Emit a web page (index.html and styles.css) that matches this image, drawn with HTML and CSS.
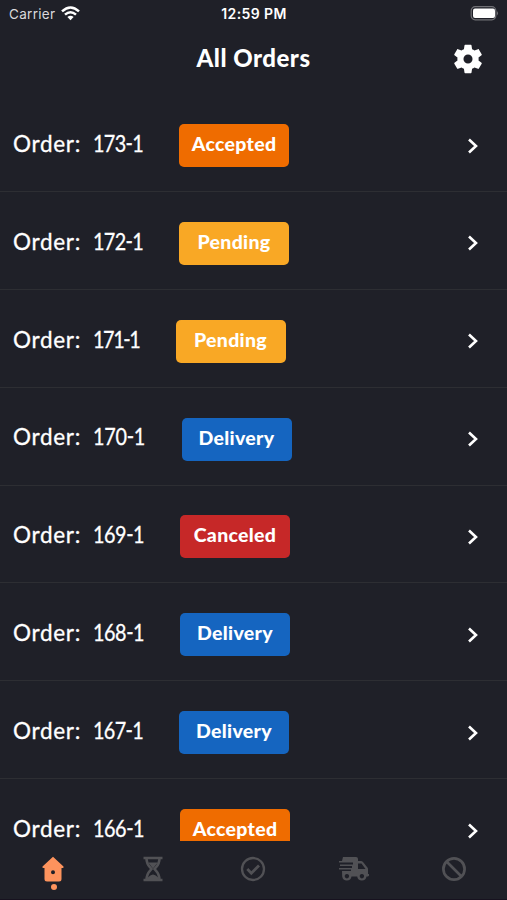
FILE: index.html
```html
<!DOCTYPE html>
<html lang="en">
<head>
<meta charset="utf-8">
<title>All Orders</title>
<link rel="stylesheet" href="styles.css">
</head>
<body>
<div class="app">
  <div class="status">
    <div class="carrier"><span>Carrier</span>
      <svg width="19" height="15" viewBox="0 0 19 15" fill="none" stroke="#fff" stroke-width="2.5"><path d="M1 5.4Q9.500-2.400 18 5.400M4 8.700Q9.500 3.700 15 8.700"/><path d="M6.400 11Q9.500 8.300 12.600 11L9.500 14.200z" fill="#fff" stroke="none"/></svg>
    </div>
    <div class="clock">12:59 PM</div>
    <svg class="battery" width="29" height="15" viewBox="0 0 28 15"><rect x=".7" y=".7" width="24.600" height="13.100" rx="4" fill="none" stroke="#707075" stroke-width="1.200"/><rect x="2.500" y="2.500" width="22" height="9.500" rx="2" fill="#fff"/><path d="M26.400 5q2.200 2.200 0 4.500z" fill="#707075"/></svg>
  </div>
  <header class="header">
    <h1>All Orders</h1>
    <svg class="gear" width="34" height="34" viewBox="0 0 24 24" fill="#fff"><path d="M19.430 12.980c.04-.32.070-.64.070-.98s-.03-.66-.07-.98l2.110-1.650c.19-.15.240-.42.120-.64l-2-3.460c-.12-.22-.39-.3-.61-.22l-2.490 1c-.52-.4-1.080-.73-1.690-.98l-.38-2.650A.49.49 0 0 0 14 2h-4c-.25 0-.46.180-.49.420l-.38 2.650c-.61.250-1.170.590-1.690.980l-2.490-1c-.23-.09-.49 0-.61.220l-2 3.460c-.13.220-.07.490.120.640l2.110 1.650c-.04.320-.07.650-.07.980s.03.660.070.980l-2.110 1.650c-.19.150-.24.420-.12.640l2 3.460c.12.220.39.300.61.220l2.490-1c.52.400 1.080.730 1.690.980l.38 2.650c.03.240.240.420.490.420h4c.25 0 .46-.18.490-.42l.38-2.650c.61-.25 1.170-.59 1.690-.98l2.490 1c.23.090.490 0 .610-.22l2-3.460c.12-.22.070-.49-.12-.64zM12 15.200a3.200 3.200 0 1 1 0-6.400 3.200 3.200 0 0 1 0 6.400z"/></svg>
  </header>
  <main class="orders">
    <div class="row"><span class="label">Order:</span><span class="number">173-1</span><span class="badge accepted">Accepted</span><svg class="chevron" viewBox="0 0 12 18"><path d="M2 2.500 9 9 2 15.500"/></svg></div>
    <div class="row"><span class="label">Order:</span><span class="number">172-1</span><span class="badge pending">Pending</span><svg class="chevron" viewBox="0 0 12 18"><path d="M2 2.500 9 9 2 15.500"/></svg></div>
    <div class="row"><span class="label">Order:</span><span class="number slim">171-1</span><span class="badge pending">Pending</span><svg class="chevron" viewBox="0 0 12 18"><path d="M2 2.500 9 9 2 15.500"/></svg></div>
    <div class="row"><span class="label">Order:</span><span class="number wide">170-1</span><span class="badge delivery">Delivery</span><svg class="chevron" viewBox="0 0 12 18"><path d="M2 2.500 9 9 2 15.500"/></svg></div>
    <div class="row"><span class="label">Order:</span><span class="number medium">169-1</span><span class="badge canceled">Canceled</span><svg class="chevron" viewBox="0 0 12 18"><path d="M2 2.500 9 9 2 15.500"/></svg></div>
    <div class="row"><span class="label">Order:</span><span class="number medium">168-1</span><span class="badge delivery">Delivery</span><svg class="chevron" viewBox="0 0 12 18"><path d="M2 2.500 9 9 2 15.500"/></svg></div>
    <div class="row"><span class="label">Order:</span><span class="number">167-1</span><span class="badge delivery">Delivery</span><svg class="chevron" viewBox="0 0 12 18"><path d="M2 2.500 9 9 2 15.500"/></svg></div>
    <div class="row"><span class="label">Order:</span><span class="number medium">166-1</span><span class="badge accepted">Accepted</span><svg class="chevron" viewBox="0 0 12 18"><path d="M2 2.500 9 9 2 15.500"/></svg></div>
  </main>
  <nav class="tabs">
    <div class="tab active">
      <svg width="24" height="26" viewBox="0 0 24 26"><path fill="#fd935d" fill-rule="evenodd" d="M12 .8 1.500 10.500Q1 12 2.500 12H3.500V23Q3.500 25.500 6 25.500H18Q20.500 25.500 20.500 23V12H21.500Q23 12 22.500 10.500zM12 14.200a2 2 0 1 1 0 4 2 2 0 0 1 0-4z"/></svg>
      <i class="dot"></i>
    </div>
    <div class="tab"><svg width="20" height="26" viewBox="0 0 20 26" fill="none" stroke="#515155" stroke-width="2.600"><path d="M.5 2H19.500M.5 24H19.500M3.500 2C3.500 9 6 10 8.500 13 6 16 3.500 17 3.500 24M16.500 2C16.500 9 14 10 11.500 13 14 16 16.500 17 16.500 24"/><path d="M5.200 6.500H14.800L10 12.500zM4 23Q5 20 10 18.500 15 20 16 23z" fill="#515155" stroke="none"/></svg></div>
    <div class="tab"><svg width="26" height="26" viewBox="0 0 26 26" fill="none" stroke="#515155" stroke-width="2.300"><circle cx="13" cy="13" r="11"/><path d="m7.300 13 4 4.200L19 9.500" stroke-width="2.700"/></svg></div>
    <div class="tab"><svg width="32" height="26" viewBox="0 0 32 26"><path fill="#515155" fill-rule="evenodd" d="M5 1H18Q20 1 20 3V5H23Q24 5 25 6L29 11Q30 12 30 13V18H31Q31.500 20 30 20.500H28.500A4.700 4.700 0 0 1 19.200 20.500H13.500A4.700 4.700 0 0 1 4.200 20.500L4 15H13V13.500H1V12H14V10H2V8.500H15V6.500H1V5H4zM20 7.500V13H27.500L23.500 7.500zM8.900 18a2.200 2.200 0 1 0 .01 0zM23.900 18a2.200 2.200 0 1 0 .01 0z"/></svg></div>
    <div class="tab"><svg width="26" height="26" viewBox="0 0 26 26" fill="none" stroke="#515155" stroke-width="2.700"><circle cx="13" cy="13" r="10.600"/><path d="m5.500 5.500 15 15"/></svg></div>
  </nav>
</div>
</body>
</html>
```
FILE: styles.css
```css
* { box-sizing: border-box; }
body {
  margin: 0;
  background: #1f2028;
  color: #fff;
  font-family: Lato, "Liberation Sans", sans-serif;
}
.app {
  height: 900px;
  display: flex;
  flex-direction: column;
  overflow: hidden;
}
.status {
  height: 27px;
  flex: none;
  display: grid;
  grid-template-columns: 1fr auto 1fr;
  align-items: center;
  padding: 0 8px 0 9px;
  font-family: Inter, "Liberation Sans", sans-serif;
  font-size: 13px;
}
.carrier {
  display: flex;
  align-items: center;
  gap: 6px;
  color: #d9d9dc;
  font-size: 13.500px;
  letter-spacing: .3px;
}
.clock {
  font-weight: 600;
  font-size: 14px;
  letter-spacing: .4px;
}
.battery { justify-self: end; }
.header {
  height: 67.200px;
  flex: none;
  display: grid;
  grid-template-columns: 1fr auto 1fr;
  padding: 15px 22px 0;
}
h1 {
  grid-column: 2;
  margin: 0;
  font-size: 24px;
  line-height: 32px;
  font-weight: 900;
  letter-spacing: .5px;
}
.gear {
  justify-self: end;
}
.orders {
  height: 747.300px;
  flex: none;
  overflow: hidden;
}
.row {
  height: 97.850px;
  display: flex;
  align-items: center;
  padding: 6px 28px 0 13px;
  border-bottom: 1px solid #2d2e33;
  font-size: 22.500px;
}
.label, .number {
  line-height: 30px;
  padding-bottom: 3.500px;
  white-space: nowrap;
  -webkit-text-stroke: .3px #fff;
}
.label {
  width: 79.500px;
  letter-spacing: .7px;
}
.number {
  width: 86.500px;
  font-size: 22.500px;
  letter-spacing: -.7px;
  font-feature-settings: "case";
  transform: scaleX(.88);
  transform-origin: left;
}
.slim { width: 83px; letter-spacing: -1.600px; }
.medium { width: 87.500px; letter-spacing: -.5px; }
.wide { width: 89px; letter-spacing: -.3px; }
.badge {
  width: 110px;
  height: 43px;
  border-radius: 5px;
  font-size: 19.500px;
  font-weight: 900;
  line-height: 40px;
  text-align: center;
  letter-spacing: .3px;
}
.accepted { background: #ef6c00; }
.pending { background: #f9a825; }
.delivery { background: #1565c0; }
.canceled { background: #c62828; }
.chevron {
  width: 12px;
  height: 18px;
  margin-left: auto;
  fill: none;
  stroke: #fff;
  stroke-width: 2.600;
}
.tabs {
  flex: 1;
  display: grid;
  grid-template-columns: repeat(5, 100.300px);
  justify-content: center;
  background: #1f2028;
  border-bottom: 1px solid #17121f;
}
.tab {
  display: flex;
  flex-direction: column;
  align-items: center;
  padding-top: 15px;
}
.dot {
  width: 6px;
  height: 6px;
  margin: 2px 0 0 2px;
  border-radius: 50%;
  background: #fd935d;
}
```
